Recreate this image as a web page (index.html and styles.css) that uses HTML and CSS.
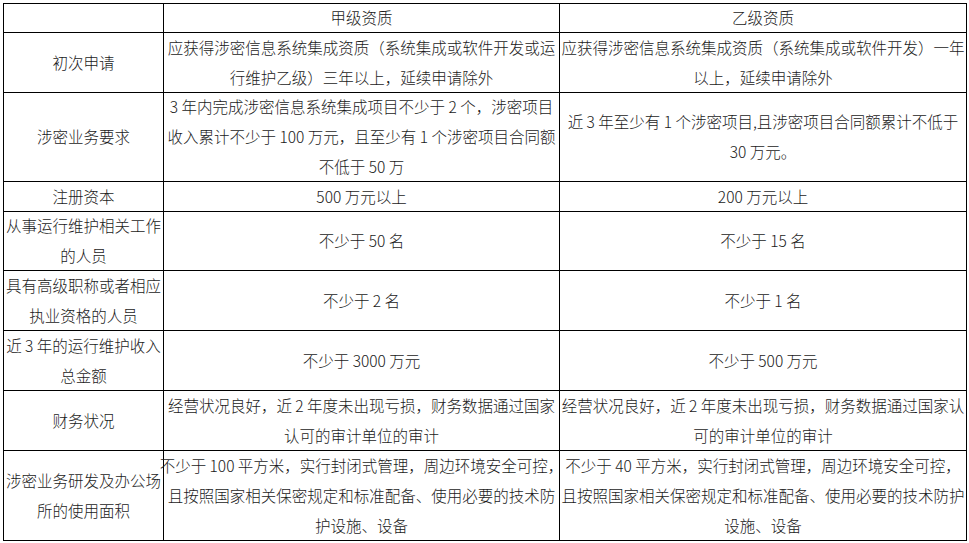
FILE: index.html
```html
<!DOCTYPE html>
<html lang="zh-CN">
<head>
<meta charset="utf-8">
<title>涉密信息系统集成资质</title>
<link rel="stylesheet" href="styles.css">
</head>
<body>
<div class="grid">
  <div class="cell"></div>
  <div class="cell">甲级资质</div>
  <div class="cell">乙级资质</div>

  <div class="cell">初次申请</div>
  <div class="cell">应获得涉密信息系统集成资质（系统集成或软件开发或运<br>行维护乙级）三年以上，延续申请除外</div>
  <div class="cell">应获得涉密信息系统集成资质（系统集成或软件开发）一年<br>以上，延续申请除外</div>

  <div class="cell">涉密业务要求</div>
  <div class="cell">3 年内完成涉密信息系统集成项目不少于 2 个，涉密项目<br>收入累计不少于 100 万元，且至少有 1 个涉密项目合同额<br>不低于 50 万</div>
  <div class="cell">近 3 年至少有 1 个涉密项目,且涉密项目合同额累计不低于<br>30 万元。</div>

  <div class="cell">注册资本</div>
  <div class="cell">500 万元以上</div>
  <div class="cell">200 万元以上</div>

  <div class="cell">从事运行维护相关工作<br>的人员</div>
  <div class="cell">不少于 50 名</div>
  <div class="cell">不少于 15 名</div>

  <div class="cell">具有高级职称或者相应<br>执业资格的人员</div>
  <div class="cell">不少于 2 名</div>
  <div class="cell">不少于 1 名</div>

  <div class="cell">近 3 年的运行维护收入<br>总金额</div>
  <div class="cell">不少于 3000 万元</div>
  <div class="cell">不少于 500 万元</div>

  <div class="cell">财务状况</div>
  <div class="cell">经营状况良好，近 2 年度未出现亏损，财务数据通过国家<br>认可的审计单位的审计</div>
  <div class="cell">经营状况良好，近 2 年度未出现亏损，财务数据通过国家认<br>可的审计单位的审计</div>

  <div class="cell">涉密业务研发及办公场<br>所的使用面积</div>
  <div class="cell">不少于 100 平方米，实行封闭式管理，周边环境安全可控，<br>且按照国家相关保密规定和标准配备、使用必要的技术防<br>护设施、设备</div>
  <div class="cell">不少于 40 平方米，实行封闭式管理，周边环境安全可控，<br>且按照国家相关保密规定和标准配备、使用必要的技术防护<br>设施、设备</div>
</div>
</body>
</html>
```

FILE: styles.css
```css
html, body {
  margin: 0;
  background: #ffffff;
}

body {
  padding: 3px 0 0 3px;
  font-family: "Noto Sans CJK SC", "Noto Sans", sans-serif;
  font-size: 15.5px;
  font-weight: 300;
  color: #1a1a1a;
}

.grid {
  display: grid;
  grid-template-columns: 160px 396px 407px;
  grid-template-rows: 29px 60px 89px 30px 59px 60px 60px 60px 90px;
  width: max-content;
  border-top: 1px solid #000;
  border-left: 1px solid #000;
}

.cell {
  border-right: 1px solid #000;
  border-bottom: 1px solid #000;
  display: flex;
  align-items: center;
  justify-content: center;
  text-align: center;
  line-height: 30px;
  white-space: nowrap;
  padding-bottom: 2px;
  box-sizing: border-box;
}
```
